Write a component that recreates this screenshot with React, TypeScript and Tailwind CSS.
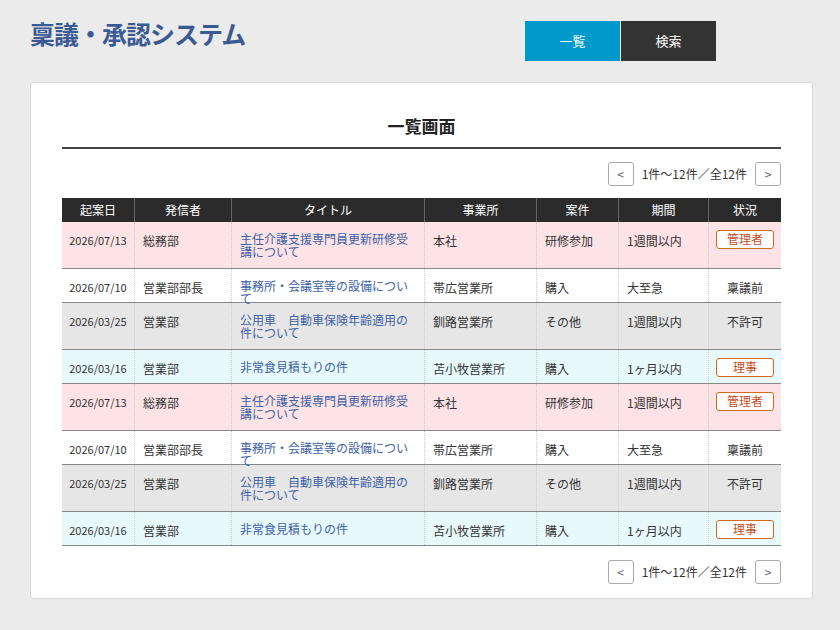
import React from "react";

const rows = [
  { d: "2026/07/13", s: "総務部", t: "主任介護支援専門員更新研修受講について", o: "本社", k: "研修参加", p: "1週間以内", st: "管理者", badge: true, bg: "bg-[#fde3e5]", tall: true },
  { d: "2026/07/10", s: "営業部部長", t: "事務所・会議室等の設備について", o: "帯広営業所", k: "購入", p: "大至急", st: "稟議前", badge: false, bg: "bg-white", tall: false },
  { d: "2026/03/25", s: "営業部", t: "公用車　自動車保険年齢適用の件について", o: "釧路営業所", k: "その他", p: "1週間以内", st: "不許可", badge: false, bg: "bg-[#e6e6e6]", tall: true },
  { d: "2026/03/16", s: "営業部", t: "非常食見積もりの件", o: "苫小牧営業所", k: "購入", p: "1ヶ月以内", st: "理事", badge: true, bg: "bg-[#e8f9fc]", tall: false },
];
const all = [...rows, ...rows];
const cols = ["w-[72px]", "w-[97px]", "w-[193px]", "w-[112px]", "w-[82px]", "w-[90px]", "w-[73px]"];
const heads = ["起案日", "発信者", "タイトル", "事業所", "案件", "期間", "状況"];

function Pager() {
  return (
    <div className="flex justify-end items-center gap-[8px] text-[12px] text-[#333]">
      <div className="w-[26px] h-[24px] border border-[#aaa] rounded-[3px] bg-white flex items-center justify-center text-[#666]">&lt;</div>
      <span>1件～12件／全12件</span>
      <div className="w-[26px] h-[24px] border border-[#aaa] rounded-[3px] bg-white flex items-center justify-center text-[#666]">&gt;</div>
    </div>
  );
}

export default function App() {
  return (
    <div className="w-[840px] h-[630px] bg-[#ebebeb] overflow-hidden" style={{ fontFamily: '"Noto Sans CJK JP", "Noto Sans", sans-serif' }}>
      <div className="flex items-start pt-[21px] pl-[30px]">
        <div className="text-[25px] font-bold text-[#3b5a94] leading-none mt-[0px] tracking-[-1px]">稟議・承認システム</div>
        <div className="ml-auto mr-[124px] flex gap-[1px]">
          <div className="w-[95px] h-[40px] bg-[#0099cc] text-white text-[13px] flex items-center justify-center">一覧</div>
          <div className="w-[95px] h-[40px] bg-[#333] text-white text-[13px] flex items-center justify-center">検索</div>
        </div>
      </div>
      <div className="mx-[30px] mt-[21px] w-[783px] h-[517px] bg-white border border-[#d8d8d8] rounded-[3px] px-[31px]">
        <div className="pt-[30px] pb-[8px] text-center text-[17px] font-bold text-[#222] border-b-2 border-[#444]">一覧画面</div>
        <div className="mt-[13px]"><Pager /></div>
        <div className="mt-[12px] text-[12px]">
          <div className="flex bg-[#2b2b2b] text-white h-[24px]">
            {heads.map((h, i) => (
              <div key={h} className={`${cols[i]} flex items-center justify-center ${i > 0 ? "border-l border-[#666]" : ""}`}>{h}</div>
            ))}
          </div>
          {all.map((r, idx) => (
            <div key={idx} className={`flex ${r.bg} border-b border-[#888] ${r.tall ? "h-[47px]" : "h-[34px]"} text-[#333]`}>
              <div className={`${cols[0]} pt-[10px] text-center text-[11px]`}>{r.d}</div>
              <div className={`${cols[1]} pt-[10px] px-[8px] border-l border-dotted border-[#ccc]`}>{r.s}</div>
              <div className={`${cols[2]} pt-[10px] px-[8px] border-l border-dotted border-[#ccc] text-[#3d62a6] leading-[13px]`}>{r.t}</div>
              <div className={`${cols[3]} pt-[10px] px-[8px] border-l border-dotted border-[#ccc]`}>{r.o}</div>
              <div className={`${cols[4]} pt-[10px] px-[8px] border-l border-dotted border-[#ccc]`}>{r.k}</div>
              <div className={`${cols[5]} pt-[10px] px-[8px] border-l border-dotted border-[#ccc]`}>{r.p}</div>
              <div className={`${cols[6]} border-l border-dotted border-[#ccc] flex justify-center ${r.badge ? "pt-[8px]" : "pt-[10px]"}`}>
                {r.badge ? (
                  <div className="w-[58px] h-[19px] border border-[#d2691e] rounded-[3px] bg-white text-[#c5501f] flex items-center justify-center">{r.st}</div>
                ) : (
                  <span>{r.st}</span>
                )}
              </div>
            </div>
          ))}
        </div>
        <div className="mt-[14px]"><Pager /></div>
      </div>
    </div>
  );
}
